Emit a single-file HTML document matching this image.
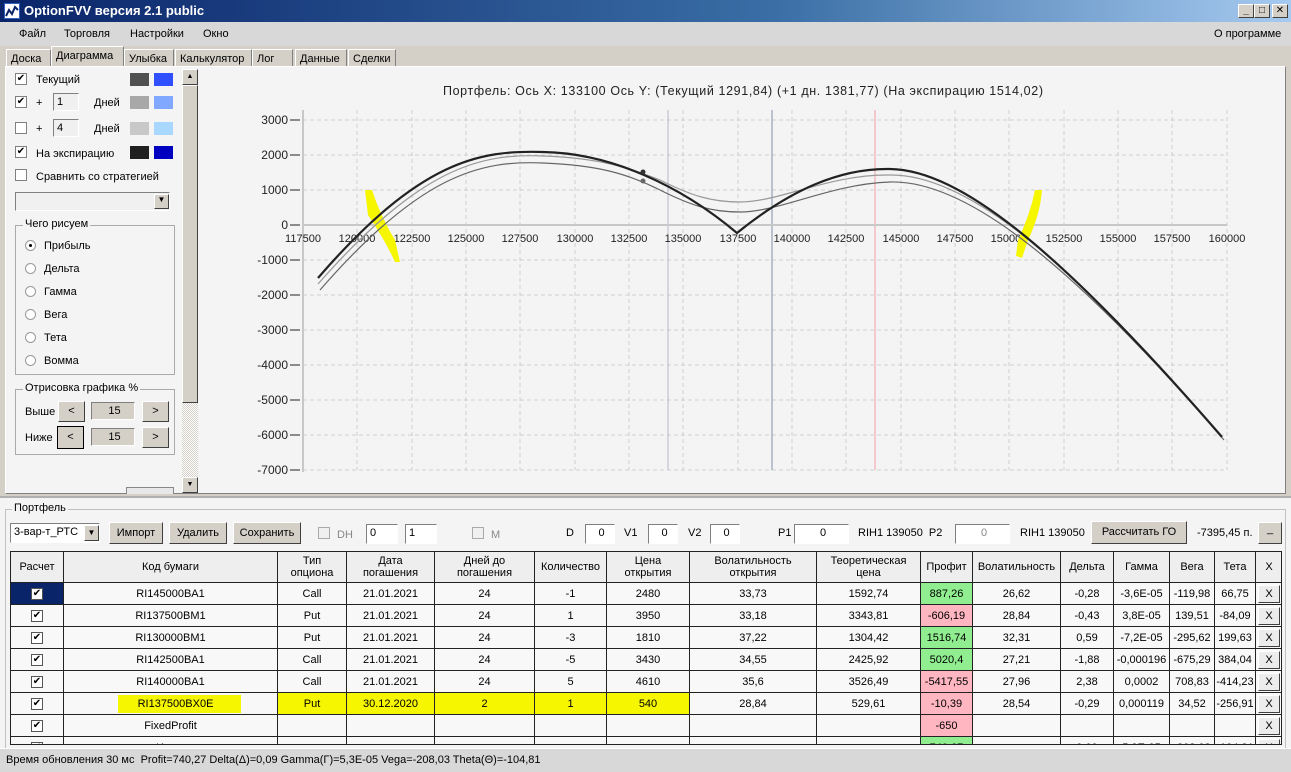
<!DOCTYPE html>
<html><head><meta charset="utf-8"><style>
*{box-sizing:border-box;margin:0;padding:0}
body{width:1291px;height:772px;overflow:hidden;background:#d4d0c8;font-family:"Liberation Sans","DejaVu Sans",sans-serif;font-size:11px;color:#000;position:relative}
.a{position:absolute}
.title{left:0;top:0;width:1291px;height:22px;background:linear-gradient(90deg,#0a246a,#3a6ea5 60%,#a6caf0);color:#fff;font-weight:bold;font-size:13px;line-height:22px;padding-left:24px}
.wb{top:4px;width:16px;height:14px;background:#d4d0c8;border:1px solid;border-color:#fff #404040 #404040 #fff;font-size:10px;line-height:11px;text-align:center;color:#000;font-weight:bold}
.menu{left:0;top:22px;width:1291px;height:24px;background:#d8d8d8}
.menu span{position:absolute;top:6px;font-size:11px}
.tab{top:49px;height:18px;border:1px solid #fff;border-right-color:#808080;border-bottom:none;padding:3px 4px 0;font-size:11px;background:#d4d0c8}
.panel{left:5px;top:66px;width:1281px;height:428px;background:#f4f4f4;border:1px solid;border-color:#fff #808080 #808080 #fff}
.cb{width:12px;height:12px;border:1px solid #808080;background:#fff;font-size:10px;line-height:10px;text-align:center}
.sw{width:19px;height:13px}
.inp{height:18px;border:1px solid;border-color:#808080 #fff #fff #808080;background:#f0f0f0;padding-left:3px;line-height:16px}
.btn{background:#d4d0c8;border:1px solid;border-color:#fff #404040 #404040 #fff;text-align:center;font-size:11px}
.rd{width:11px;height:11px;border-radius:50%;border:1px solid #999;background:#fff}
.grp{border:1px solid #aaa}
.gl{background:#f4f4f4;padding:0 2px;font-size:11px}
table{border-collapse:collapse;table-layout:fixed;font-size:11px}
td{border:1px solid #222;text-align:center;height:22px;white-space:nowrap;overflow:hidden;background:#f8f8f8;padding:0}
tr.h td{height:31px;background:#eeeeee;line-height:12px}
.g{background:#90ee90!important}.p{background:#ffb6c1!important}.y{background:#f6f600!important}
.xb{display:block;margin:1px auto;width:22px;height:18px;border:1px solid;border-color:#fff #404040 #404040 #fff;background:#ececec;line-height:16px}
.ck{display:inline-block;width:12px;height:12px;border:1px solid #555;background:#fff;font-size:10px;line-height:10px}
</style></head><body>
<div class="a title">OptionFVV версия 2.1 public</div>
<div class="a" style="left:4px;top:3px;width:16px;height:16px;background:#fff;border:1px solid #3060c0"><svg width="14" height="14"><path d="M1 12 L4 6 L7 10 L10 3 L13 6" stroke="#0a246a" stroke-width="2" fill="none"/></svg></div>
<div class="a wb" style="left:1238px">_</div><div class="a wb" style="left:1254px">□</div><div class="a wb" style="left:1272px">✕</div>
<div class="a menu"><span style="left:19px">Файл</span><span style="left:64px">Торговля</span><span style="left:130px">Настройки</span><span style="left:203px">Окно</span><span style="left:1214px">О программе</span></div>
<div class="a tab" style="left:6px;width:45px">Доска</div>
<div class="a tab" style="left:51px;top:46px;height:21px;width:73px;background:#d4d0c8">Диаграмма</div>
<div class="a tab" style="left:124px;width:50px">Улыбка</div>
<div class="a tab" style="left:175px;width:77px">Калькулятор</div>
<div class="a tab" style="left:252px;width:41px">Лог</div>
<div class="a tab" style="left:295px;width:52px">Данные</div>
<div class="a tab" style="left:348px;width:48px">Сделки</div>
<div class="a panel"></div>
<!-- left controls -->
<div class="a cb" style="left:15px;top:73px">✔</div><div class="a" style="left:36px;top:74px">Текущий</div>
<div class="a sw" style="left:130px;top:73px;background:#505050"></div><div class="a sw" style="left:154px;top:73px;background:#3050ff"></div>
<div class="a cb" style="left:15px;top:96px">✔</div><div class="a" style="left:36px;top:97px">+</div><div class="a inp" style="left:53px;top:93px;width:26px">1</div><div class="a" style="left:94px;top:97px">Дней</div>
<div class="a sw" style="left:130px;top:96px;background:#a8a8a8"></div><div class="a sw" style="left:154px;top:96px;background:#80a8ff"></div>
<div class="a cb" style="left:15px;top:122px"></div><div class="a" style="left:36px;top:123px">+</div><div class="a inp" style="left:53px;top:119px;width:26px">4</div><div class="a" style="left:94px;top:123px">Дней</div>
<div class="a sw" style="left:130px;top:122px;background:#c8c8c8"></div><div class="a sw" style="left:154px;top:122px;background:#a8d8ff"></div>
<div class="a cb" style="left:15px;top:146px">✔</div><div class="a" style="left:36px;top:148px">На экспирацию</div>
<div class="a sw" style="left:130px;top:146px;background:#202020"></div><div class="a sw" style="left:154px;top:146px;background:#0000c0"></div>
<div class="a cb" style="left:15px;top:169px"></div><div class="a" style="left:36px;top:171px">Сравнить со стратегией</div>
<div class="a inp" style="left:15px;top:192px;width:155px;height:19px"></div><div class="a btn" style="left:154px;top:194px;width:15px;height:15px;font-size:8px">▼</div>
<div class="a grp" style="left:15px;top:225px;width:160px;height:150px"></div><div class="a gl" style="left:23px;top:218px">Чего рисуем</div>
<div class="a rd" style="left:25px;top:240px"><div style="width:3px;height:3px;background:#000;border-radius:50%;margin:3px"></div></div><div class="a" style="left:44px;top:240px">Прибыль</div>
<div class="a rd" style="left:25px;top:263px"></div><div class="a" style="left:44px;top:263px">Дельта</div>
<div class="a rd" style="left:25px;top:286px"></div><div class="a" style="left:44px;top:286px">Гамма</div>
<div class="a rd" style="left:25px;top:309px"></div><div class="a" style="left:44px;top:309px">Вега</div>
<div class="a rd" style="left:25px;top:332px"></div><div class="a" style="left:44px;top:332px">Тета</div>
<div class="a rd" style="left:25px;top:355px"></div><div class="a" style="left:44px;top:355px">Вомма</div>
<div class="a grp" style="left:15px;top:389px;width:160px;height:66px"></div><div class="a gl" style="left:23px;top:382px">Отрисовка графика %</div>
<div class="a" style="left:25px;top:406px">Выше</div><div class="a btn" style="left:58px;top:401px;width:27px;height:21px;line-height:19px">&lt;</div><div class="a inp" style="left:91px;top:402px;width:44px;text-align:center;background:#d4d0c8">15</div><div class="a btn" style="left:142px;top:401px;width:27px;height:21px;line-height:19px">&gt;</div>
<div class="a" style="left:25px;top:432px">Ниже</div><div class="a btn" style="left:57px;top:426px;width:27px;height:23px;line-height:21px;border:1px solid #000">&lt;</div><div class="a inp" style="left:91px;top:428px;width:44px;text-align:center;background:#d4d0c8">15</div><div class="a btn" style="left:142px;top:427px;width:27px;height:21px;line-height:19px">&gt;</div>
<div class="a" style="left:126px;top:487px;width:48px;height:7px;border:1px solid #888;border-bottom:none;background:#e8e8e8"></div>
<div class="a" style="left:182px;top:69px;width:16px;height:424px;background:repeating-conic-gradient(#d4d0c8 0 25%,#fff 0 50%) 0 0/2px 2px"></div>
<div class="a btn" style="left:182px;top:69px;width:16px;height:16px;font-size:7px;line-height:14px">▲</div>
<div class="a btn" style="left:182px;top:85px;width:16px;height:318px"></div>
<div class="a btn" style="left:182px;top:477px;width:16px;height:16px;font-size:7px;line-height:14px">▼</div>
<!-- chart -->
<svg class="a" style="left:199px;top:67px" width="1086" height="426" font-family="Liberation Sans,sans-serif" font-size="12">
<g transform="translate(-199,-67)">
<text x="743" y="95" text-anchor="middle" fill="#222" font-size="12.5" textLength="600">Портфель: Ось X: 133100 Ось Y:  (Текущий 1291,84)  (+1 дн. 1381,77)  (На экспирацию 1514,02)</text>
<g stroke="#cfcfcf" stroke-dasharray="4,3">
<line x1="303" y1="120" x2="1227" y2="120"/><line x1="303" y1="155" x2="1227" y2="155"/><line x1="303" y1="190" x2="1227" y2="190"/>
<line x1="303" y1="260" x2="1227" y2="260"/><line x1="303" y1="295" x2="1227" y2="295"/><line x1="303" y1="330" x2="1227" y2="330"/><line x1="303" y1="365" x2="1227" y2="365"/><line x1="303" y1="400" x2="1227" y2="400"/><line x1="303" y1="435" x2="1227" y2="435"/><line x1="303" y1="470" x2="1227" y2="470"/>
<line x1="357" y1="110" x2="357" y2="470"/><line x1="412" y1="110" x2="412" y2="470"/><line x1="466" y1="110" x2="466" y2="470"/><line x1="520" y1="110" x2="520" y2="470"/><line x1="575" y1="110" x2="575" y2="470"/><line x1="629" y1="110" x2="629" y2="470"/><line x1="683" y1="110" x2="683" y2="470"/><line x1="738" y1="110" x2="738" y2="470"/><line x1="792" y1="110" x2="792" y2="470"/><line x1="846" y1="110" x2="846" y2="470"/><line x1="901" y1="110" x2="901" y2="470"/><line x1="955" y1="110" x2="955" y2="470"/><line x1="1009" y1="110" x2="1009" y2="470"/><line x1="1064" y1="110" x2="1064" y2="470"/><line x1="1118" y1="110" x2="1118" y2="470"/><line x1="1172" y1="110" x2="1172" y2="470"/><line x1="1227" y1="110" x2="1227" y2="470"/>
</g>
<line x1="668" y1="110" x2="668" y2="470" stroke="#b8b8c8"/>
<line x1="772" y1="110" x2="772" y2="470" stroke="#8090a8"/>
<line x1="875" y1="110" x2="875" y2="470" stroke="#f0a0a8"/>
<line x1="303" y1="110" x2="303" y2="472" stroke="#c8c8c8" stroke-width="2"/>
<line x1="303" y1="225" x2="1227" y2="225" stroke="#c8c8c8" stroke-width="2"/>
<g stroke="#222"><line x1="290" y1="120" x2="300" y2="120"/><line x1="290" y1="155" x2="300" y2="155"/><line x1="290" y1="190" x2="300" y2="190"/><line x1="290" y1="225" x2="300" y2="225"/><line x1="290" y1="260" x2="300" y2="260"/><line x1="290" y1="295" x2="300" y2="295"/><line x1="290" y1="330" x2="300" y2="330"/><line x1="290" y1="365" x2="300" y2="365"/><line x1="290" y1="400" x2="300" y2="400"/><line x1="290" y1="435" x2="300" y2="435"/><line x1="290" y1="470" x2="300" y2="470"/></g>
<g text-anchor="end" fill="#222"><text x="288" y="124">3000</text><text x="288" y="159">2000</text><text x="288" y="194">1000</text><text x="288" y="229">0</text><text x="288" y="264">-1000</text><text x="288" y="299">-2000</text><text x="288" y="334">-3000</text><text x="288" y="369">-4000</text><text x="288" y="404">-5000</text><text x="288" y="439">-6000</text><text x="288" y="474">-7000</text></g>
<g text-anchor="middle" fill="#222" font-size="11"><text x="303" y="242">117500</text><text x="357" y="242">120000</text><text x="412" y="242">122500</text><text x="466" y="242">125000</text><text x="520" y="242">127500</text><text x="575" y="242">130000</text><text x="629" y="242">132500</text><text x="683" y="242">135000</text><text x="738" y="242">137500</text><text x="792" y="242">140000</text><text x="846" y="242">142500</text><text x="901" y="242">145000</text><text x="955" y="242">147500</text><text x="1009" y="242">150000</text><text x="1064" y="242">152500</text><text x="1118" y="242">155000</text><text x="1172" y="242">157500</text><text x="1227" y="242">160000</text></g>
<path d="M365 190 L372 190 Q380 215 395 240 L400 262 L395 262 Q385 240 368 215 Z" fill="#f6f600"/>
<path d="M1035 190 L1042 190 Q1040 215 1028 240 L1022 258 L1016 256 L1018 240 Q1030 215 1035 190 Z" fill="#f6f600"/>
<g fill="none">
<path d="M320 290 C420 175 480 160 543 163 C600 165 630 175 660 190 C690 205 710 212 740 212 C780 212 830 184 890 182 C960 180 1060 250 1224 440" stroke="#666" stroke-width="1.2"/>
<path d="M318 284 C420 168 480 153 543 156 C600 158 630 168 660 180 C690 195 710 202 740 202 C780 202 830 174 890 175 C960 174 1060 246 1222 438" stroke="#999" stroke-width="1.2"/>
<path d="M318 278 C420 160 480 150 543 152 C610 153 680 185 737 233 C790 190 840 168 890 169 C960 170 1060 250 1222 437" stroke="#222" stroke-width="2.2"/>
</g>
<circle cx="643" cy="172" r="2.5" fill="#333"/><circle cx="643" cy="181" r="2.5" fill="#666"/>
</g></svg>
<!-- portfolio -->
<div class="a" style="left:0;top:496px;width:1291px;height:252px;background:#f4f4f4;border-top:2px solid #b0b0b0"></div>
<div class="a grp" style="left:5px;top:509px;width:1281px;height:245px;border-color:#c0c0c0"></div>
<div class="a gl" style="left:12px;top:502px">Портфель</div>
<div class="a inp" style="left:10px;top:523px;width:90px;height:20px;background:#fff">3-вар-т_РТС</div><div class="a btn" style="left:84px;top:525px;width:15px;height:16px;font-size:8px;line-height:14px">▼</div>
<div class="a btn" style="left:109px;top:522px;width:54px;height:22px;line-height:20px">Импорт</div>
<div class="a btn" style="left:169px;top:522px;width:58px;height:22px;line-height:20px">Удалить</div>
<div class="a btn" style="left:233px;top:522px;width:68px;height:22px;line-height:20px">Сохранить</div>
<div class="a cb" style="left:318px;top:527px;background:#f0f0f0;border-color:#aaa"></div><div class="a" style="left:337px;top:529px;color:#888">DH</div>
<div class="a inp" style="left:366px;top:524px;width:32px;height:20px;background:#fff">0</div>
<div class="a inp" style="left:405px;top:524px;width:32px;height:20px;background:#fff">1</div>
<div class="a cb" style="left:472px;top:527px;background:#f0f0f0;border-color:#aaa"></div><div class="a" style="left:491px;top:529px;color:#888">M</div>
<div class="a" style="left:566px;top:527px">D</div><div class="a inp" style="left:585px;top:524px;width:30px;height:20px;background:#fff;text-align:center">0</div>
<div class="a" style="left:624px;top:527px">V1</div><div class="a inp" style="left:648px;top:524px;width:30px;height:20px;background:#fff;text-align:center">0</div>
<div class="a" style="left:688px;top:527px">V2</div><div class="a inp" style="left:710px;top:524px;width:30px;height:20px;background:#fff;text-align:center">0</div>
<div class="a" style="left:778px;top:527px">P1</div><div class="a inp" style="left:794px;top:524px;width:55px;height:20px;background:#fff;text-align:center">0</div>
<div class="a" style="left:858px;top:527px">RIH1 139050 &nbsp;P2</div>
<div class="a inp" style="left:955px;top:524px;width:55px;height:20px;background:#fff;text-align:center;color:#888">0</div>
<div class="a" style="left:1020px;top:527px">RIH1 139050</div>
<div class="a btn" style="left:1091px;top:521px;width:96px;height:23px;line-height:21px">Рассчитать ГО</div>
<div class="a" style="left:1197px;top:527px">-7395,45 п.</div>
<div class="a btn" style="left:1258px;top:522px;width:24px;height:22px">_</div>
<div class="a" style="left:10px;top:551px;width:1272px;height:194px;overflow:hidden;border:1px solid #222">
<table style="width:1270px;margin:-1px 0 0 -1px">
<colgroup><col style="width:53px"><col style="width:214px"><col style="width:69px"><col style="width:88px"><col style="width:100px"><col style="width:72px"><col style="width:83px"><col style="width:127px"><col style="width:104px"><col style="width:52px"><col style="width:88px"><col style="width:53px"><col style="width:56px"><col style="width:45px"><col style="width:41px"><col style="width:27px"></colgroup>
<tr class="h"><td>Расчет</td><td>Код бумаги</td><td>Тип<br>опциона</td><td>Дата<br>погашения</td><td>Дней до<br>погашения</td><td>Количество</td><td>Цена<br>открытия</td><td>Волатильность<br>открытия</td><td>Теоретическая<br>цена</td><td>Профит</td><td>Волатильность</td><td>Дельта</td><td>Гамма</td><td>Вега</td><td>Тета</td><td>X</td></tr>
<tr><td style="background:#0a246a"><span class="ck">✔</span></td><td>RI145000BA1</td><td>Call</td><td>21.01.2021</td><td>24</td><td>-1</td><td>2480</td><td>33,73</td><td>1592,74</td><td class="g">887,26</td><td>26,62</td><td>-0,28</td><td>-3,6E-05</td><td>-119,98</td><td>66,75</td><td><span class="xb">X</span></td></tr>
<tr><td><span class="ck">✔</span></td><td>RI137500BM1</td><td>Put</td><td>21.01.2021</td><td>24</td><td>1</td><td>3950</td><td>33,18</td><td>3343,81</td><td class="p">-606,19</td><td>28,84</td><td>-0,43</td><td>3,8E-05</td><td>139,51</td><td>-84,09</td><td><span class="xb">X</span></td></tr>
<tr><td><span class="ck">✔</span></td><td>RI130000BM1</td><td>Put</td><td>21.01.2021</td><td>24</td><td>-3</td><td>1810</td><td>37,22</td><td>1304,42</td><td class="g">1516,74</td><td>32,31</td><td>0,59</td><td>-7,2E-05</td><td>-295,62</td><td>199,63</td><td><span class="xb">X</span></td></tr>
<tr><td><span class="ck">✔</span></td><td>RI142500BA1</td><td>Call</td><td>21.01.2021</td><td>24</td><td>-5</td><td>3430</td><td>34,55</td><td>2425,92</td><td class="g">5020,4</td><td>27,21</td><td>-1,88</td><td>-0,000196</td><td>-675,29</td><td>384,04</td><td><span class="xb">X</span></td></tr>
<tr><td><span class="ck">✔</span></td><td>RI140000BA1</td><td>Call</td><td>21.01.2021</td><td>24</td><td>5</td><td>4610</td><td>35,6</td><td>3526,49</td><td class="p">-5417,55</td><td>27,96</td><td>2,38</td><td>0,0002</td><td>708,83</td><td>-414,23</td><td><span class="xb">X</span></td></tr>
<tr><td><span class="ck">✔</span></td><td><span style="background:#f6f600;padding:3px 28px 3px 20px;margin-left:18px">RI137500BX0E</span></td><td class="y">Put</td><td class="y">30.12.2020</td><td class="y">2</td><td class="y">1</td><td class="y">540</td><td>28,84</td><td>529,61</td><td class="p">-10,39</td><td>28,54</td><td>-0,29</td><td>0,000119</td><td>34,52</td><td>-256,91</td><td><span class="xb">X</span></td></tr>
<tr><td><span class="ck">✔</span></td><td>FixedProfit</td><td></td><td></td><td></td><td></td><td></td><td></td><td></td><td class="p">-650</td><td></td><td></td><td></td><td></td><td></td><td><span class="xb">X</span></td></tr>
<tr><td><span class="ck">✔</span></td><td>Итого</td><td></td><td></td><td></td><td></td><td></td><td></td><td></td><td class="g">740,27</td><td></td><td>0,09</td><td>5,3E-05</td><td>-208,03</td><td>-104,81</td><td><span class="xb">X</span></td></tr>
</table></div>
<div class="a" style="left:0;top:748px;width:1291px;height:24px;background:#d8d8d8;border-top:1px solid #fff;padding:5px 0 0 6px">Время обновления 30 мс &nbsp;Profit=740,27 Delta(Δ)=0,09 Gamma(Γ)=5,3E-05 Vega=-208,03 Theta(Θ)=-104,81</div>
</body></html>
